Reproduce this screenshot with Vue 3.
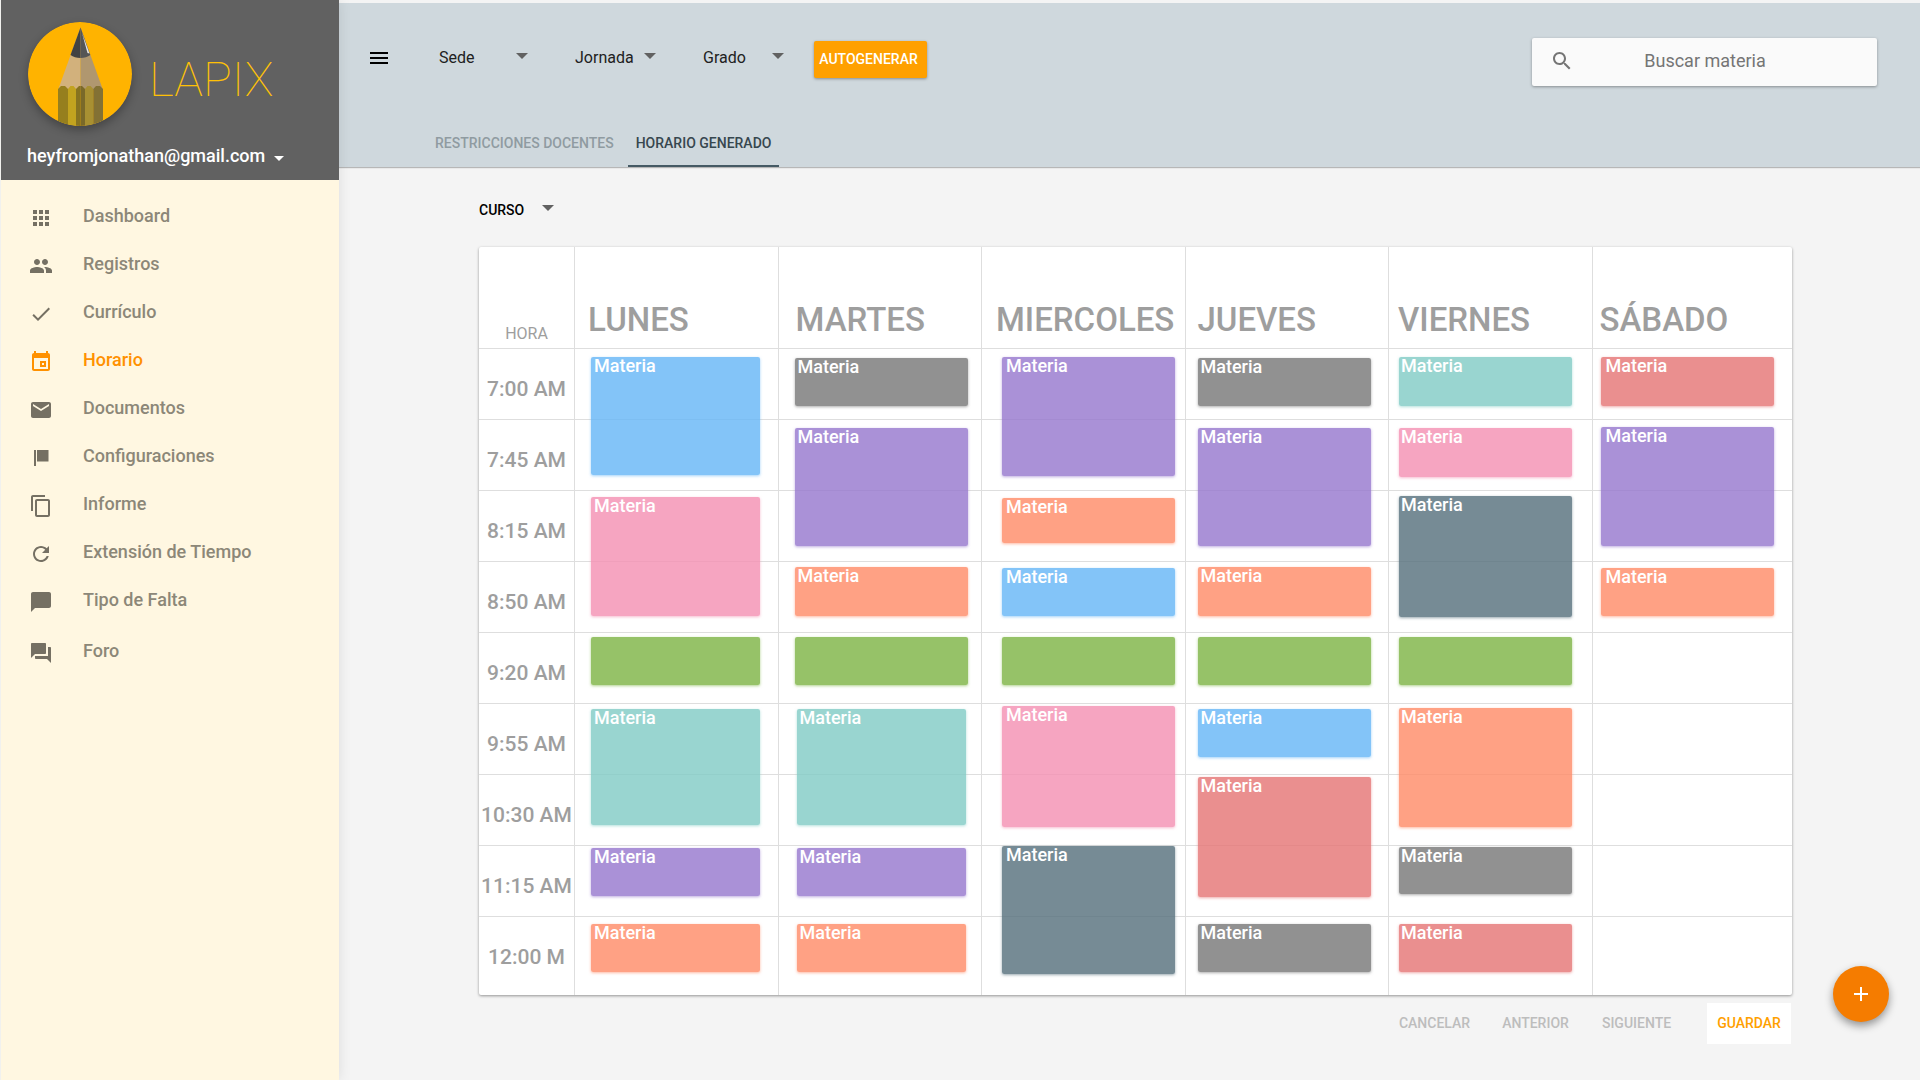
<script setup>
const navGroups = [
  [
    { label: 'Dashboard', icon: 'M4 8h4V4H4v4zm6 12h4v-4h-4v4zm-6 0h4v-4H4v4zm0-6h4v-4H4v4zm6 0h4v-4h-4v4zm6-10v4h4V4h-4zm-6 4h4V4h-4v4zm6 6h4v-4h-4v4zm0 6h4v-4h-4v4z' },
    { label: 'Registros', icon: 'M16 11c1.66 0 2.99-1.34 2.99-3S17.66 5 16 5c-1.66 0-3 1.34-3 3s1.34 3 3 3zm-8 0c1.66 0 2.99-1.34 2.99-3S9.66 5 8 5C6.34 5 5 6.34 5 8s1.34 3 3 3zm0 2c-2.33 0-7 1.17-7 3.5V19h14v-2.5c0-2.33-4.67-3.5-7-3.5zm8 0c-.29 0-.62.02-.97.05 1.16.84 1.97 1.97 1.97 3.45V19h6v-2.5c0-2.33-4.67-3.5-7-3.5z' },
    { label: 'Currículo', icon: 'M9 16.17L4.83 12l-1.42 1.41L9 19 21 7l-1.41-1.41z' },
    { label: 'Horario', active: true, icon: 'M5 1h2v2h10V1h2v2c1.1 0 2 .9 2 2v14c0 1.100-.9 2-2 2H5c-1.100 0-2-.9-2-2V5c0-1.100.9-2 2-2V1zm0 7v11h14V8H5zm6 3h6v6h-6v-6zm2 2v2h2v-2h-2z' },
    { label: 'Documentos', icon: 'M20 4H4c-1.100 0-1.990.9-1.990 2L2 18c0 1.100.9 2 2 2h16c1.100 0 2-.9 2-2V6c0-1.100-.9-2-2-2zm0 4l-8 5-8-5V6l8 5 8-5v2z' },
    { label: 'Configuraciones', icon: 'M5 4h2v16H5zM8 4h11.500v11.500H8z' },
    { label: 'Informe', icon: 'M16 1H4c-1.100 0-2 .9-2 2v14h2V3h12V1zm3 4H8c-1.100 0-2 .9-2 2v14c0 1.100.9 2 2 2h11c1.100 0 2-.9 2-2V7c0-1.100-.9-2-2-2zm0 16H8V7h11v14z' },
    { label: 'Extensión de Tiempo', icon: 'M17.650 6.350C16.200 4.900 14.210 4 12 4c-4.420 0-7.990 3.580-7.990 8s3.570 8 7.990 8c3.730 0 6.840-2.550 7.730-6h-2.080c-.82 2.330-3.040 4-5.650 4-3.310 0-6-2.690-6-6s2.690-6 6-6c1.660 0 3.140.69 4.220 1.780L13 11h7V4l-2.350 2.350z' },
    { label: 'Tipo de Falta', icon: 'M20 2H4c-1.100 0-2 .9-2 2v18l4-4h14c1.100 0 2-.9 2-2V4c0-1.100-.9-2-2-2z' },
  ],
  [
    { label: 'Foro', icon: 'M21 6h-2v9H6v2c0 .55.45 1 1 1h11l4 4V7c0-.55-.45-1-1-1zm-4 6V3c0-.55-.45-1-1-1H3c-.55 0-1 .45-1 1v14l4-4h10c.55 0 1-.45 1-1z' },
  ],
]

const filters = ['Sede', 'Jornada', 'Grado']

const hours = ['7:00 AM', '7:45 AM', '8:15 AM', '8:50 AM', '9:20 AM', '9:55 AM', '10:30 AM', '11:15 AM', '12:00 M']

/* Block: [row, offset inside the row, height, colour, free period] */
const days = [
  {
    name: 'LUNES', title: 13, left: 16, right: 18, pad: 3,
    blocks: [[0, 8, 118, 'blue'], [2, 6, 119, 'pink'], [4, 4, 48, 'green', true], [5, 5, 116, 'teal'], [7, 2, 48, 'purple'], [8, 7, 48, 'orange']],
  },
  {
    name: 'MARTES', title: 17, left: 16, right: 13, pad: 3,
    blocks: [[0, 9, 48, 'gray'], [1, 8, 118, 'purple'], [3, 5, 49, 'orange'], [4, 4, 48, 'green', true], [5, 5, 116, 'teal'], [7, 2, 48, 'purple'], [8, 7, 48, 'orange']],
    narrowFrom: 5,
  },
  {
    name: 'MIERCOLES', title: 14, left: 20, right: 10, pad: 4,
    blocks: [[0, 8, 119, 'purple'], [2, 7, 45, 'orange'], [3, 6, 48, 'blue'], [4, 4, 48, 'green', true], [5, 2, 121, 'pink'], [7, 0, 128, 'slate']],
  },
  {
    name: 'JUEVES', title: 12, left: 12, right: 17, pad: 3,
    blocks: [[0, 9, 48, 'gray'], [1, 8, 118, 'purple'], [3, 5, 49, 'orange'], [4, 4, 48, 'green', true], [5, 5, 48, 'blue'], [6, 2, 120, 'red'], [8, 7, 48, 'gray']],
  },
  {
    name: 'VIERNES', title: 9, left: 10, right: 20, pad: 2,
    blocks: [[0, 8, 49, 'teal'], [1, 8, 49, 'pink'], [2, 5, 121, 'slate'], [4, 4, 48, 'green', true], [5, 4, 119, 'orange'], [7, 1, 47, 'gray'], [8, 7, 48, 'red']],
  },
  {
    name: 'SÁBADO', title: 7, left: 8, right: 18, pad: 5,
    blocks: [[0, 8, 49, 'red'], [1, 7, 119, 'purple'], [3, 6, 48, 'orange']],
  },
]

const blocksAt = (day, row) => day.blocks.filter((b) => b[0] === row)

function blockStyle(day, block) {
  const narrow = day.narrowFrom !== undefined && block[0] >= day.narrowFrom ? 2 : 0
  return {
    top: block[1] + 'px',
    height: block[2] + 'px',
    left: day.left + narrow + 'px',
    right: day.right + narrow + 'px',
    paddingLeft: day.pad + 'px',
  }
}
</script>

<template>
  <div class="layout">
    <aside class="sidebar">
      <div class="profile">
        <div class="brand">
          <svg class="logo" viewBox="0 0 104 104" aria-hidden="true">
            <defs>
              <clipPath id="disc"><circle cx="52" cy="52" r="52" /></clipPath>
            </defs>
            <g clip-path="url(#disc)">
              <rect width="104" height="104" fill="#ffb300" />
              <path d="M52.500 5.500L30 68h22.500z" fill="#d2b17c" />
              <path d="M52.500 5.500L75 68H52.500z" fill="#b0976f" />
              <path d="M52.500 5.500L42.500 33q4 3 10 3z" fill="#424242" />
              <path d="M52.500 5.500L62.300 33q-4 3-9.800 3z" fill="#555" />
              <path d="M54 11L61.500 31.500L59.500 31z" fill="#e8e8e8" />
              <path d="M30 67L33 64h4l3 3v37H30z" fill="#967f1e" />
              <path d="M40 67L42.500 64h3l2.500 3v37h-8z" fill="#c2a31f" />
              <path d="M48 67L51 64h1.500v40H48z" fill="#87731f" />
              <path d="M52.500 64H54l3 3v37h-4.500z" fill="#7a6929" />
              <path d="M57 67L59.500 64h3l2.800 3v37H57z" fill="#a89032" />
              <path d="M65.300 67L68 64h4l3 3v37h-9.700z" fill="#837134" />
            </g>
          </svg>
          <span class="brand-name">LAPIX</span>
        </div>
        <button type="button" class="account">
          heyfromjonathan@gmail.com
          <svg class="account-arrow" viewBox="0 0 10 5" aria-hidden="true"><path d="M0 0h10L5 5z" /></svg>
        </button>
      </div>
      <nav class="nav">
        <ul v-for="(group, g) in navGroups" :key="g">
          <li v-for="item in group" :key="item.label">
            <a href="#" :class="{ active: item.active }">
              <svg viewBox="0 0 24 24" aria-hidden="true"><path :d="item.icon" /></svg>
              <span>{{ item.label }}</span>
            </a>
          </li>
        </ul>
      </nav>
    </aside>

    <div class="page">
      <header class="topbar">
        <div class="toolbar">
          <div class="filters">
            <button type="button" class="menu" aria-label="Menú">
              <svg viewBox="0 0 24 24" aria-hidden="true"><path d="M3 18h18v-2H3v2zm0-5h18v-2H3v2zm0-7v2h18V6H3z" /></svg>
            </button>
            <label v-for="name in filters" :key="name" class="picker" :class="{ wide: name === 'Sede' }">
              <select :aria-label="name"><option>{{ name }}</option></select>
              <svg viewBox="0 0 10 5" aria-hidden="true"><path d="M0 0h10L5 5z" /></svg>
            </label>
            <button type="button" class="generate">AUTOGENERAR</button>
          </div>
          <label class="search">
            <svg viewBox="0 0 24 24" aria-hidden="true"><path d="M15.500 14h-.79l-.28-.27C15.410 12.590 16 11.110 16 9.500 16 5.910 13.090 3 9.500 3S3 5.910 3 9.500 5.910 16 9.500 16c1.610 0 3.090-.59 4.230-1.570l.27.28v.79l5 4.990L20.490 19l-4.990-5zm-6 0C7.010 14 5 11.990 5 9.500S7.010 5 9.500 5 14 7.010 14 9.500 11.990 14 9.500 14z" /></svg>
            <input type="text" placeholder="Buscar materia" aria-label="Buscar materia" />
          </label>
        </div>
        <nav class="tabs">
          <a href="#">RESTRICCIONES DOCENTES</a>
          <a href="#" class="current">HORARIO GENERADO</a>
        </nav>
      </header>

      <main class="content">
        <label class="picker course">
          <select aria-label="Curso"><option>CURSO</option></select>
          <svg viewBox="0 0 10 5" aria-hidden="true"><path d="M0 0h10L5 5z" /></svg>
        </label>

        <table class="timetable">
          <colgroup>
            <col class="col-hour" />
            <col v-for="day in days" :key="day.name" :class="{ 'col-day': day.name !== 'SÁBADO' }" />
          </colgroup>
          <thead>
            <tr>
              <th scope="col" class="hour-title">HORA</th>
              <th v-for="day in days" :key="day.name" scope="col" class="day-title" :style="{ paddingLeft: day.title + 'px' }">{{ day.name }}</th>
            </tr>
          </thead>
          <tbody>
            <tr v-for="(hour, row) in hours" :key="hour">
              <th scope="row" class="hour">{{ hour }}</th>
              <td v-for="day in days" :key="day.name">
                <button
                  v-for="block in blocksAt(day, row)"
                  :key="block[1]"
                  type="button"
                  class="block"
                  :class="block[3]"
                  :style="blockStyle(day, block)"
                  :aria-label="block[4] ? 'Descanso' : undefined"
                >{{ block[4] ? '' : 'Materia' }}</button>
              </td>
            </tr>
          </tbody>
        </table>

        <div class="actions">
          <button type="button">CANCELAR</button>
          <button type="button">ANTERIOR</button>
          <button type="button">SIGUIENTE</button>
          <button type="button" class="save">GUARDAR</button>
        </div>
      </main>
    </div>

    <button type="button" class="fab" aria-label="Agregar">
      <svg viewBox="0 0 24 24" aria-hidden="true"><path d="M19 13h-6v6h-2v-6H5v-2h6V5h2v6h6v2z" /></svg>
    </button>
  </div>
</template>

<style>
body {
  background: #f4f4f4;
}
</style>

<style scoped>
* {
  box-sizing: border-box;
}
button,
input,
select {
  font: inherit;
  color: inherit;
  border: 0;
  padding: 0;
  margin: 0;
  background: none;
  outline: none;
}
button {
  cursor: pointer;
}
svg {
  display: block;
  fill: currentColor;
  flex: none;
}
a {
  color: inherit;
  text-decoration: none;
}
.layout {
  position: relative;
  display: flex;
  min-height: 100vh;
  font-family: Roboto, "Liberation Sans", sans-serif;
  background: #f4f4f4;
}

/* Sidebar */
.sidebar {
  position: relative;
  z-index: 2;
  flex: 0 0 339px;
  background: #fff7e1;
  border-left: 1px solid #f1f1ee;
  box-shadow: 0 0 12px rgba(0, 0, 0, 0.1);
}
.profile {
  height: 180px;
  padding: 22px 26px 0;
  background: #616161;
}
.brand {
  display: flex;
  align-items: center;
  gap: 17px;
  padding-left: 1px;
}
.logo {
  width: 104px;
  height: 104px;
  border-radius: 50%;
  box-shadow: 0 4px 10px rgba(0, 0, 0, 0.3);
}
.brand-name {
  padding-top: 12px;
  font-size: 48px;
  line-height: 56px;
  font-weight: 100;
  color: #ffc107;
}
.account {
  display: flex;
  align-items: center;
  gap: 9px;
  height: 24px;
  margin-top: 18px;
  font-size: 18px;
  line-height: 24px;
  font-weight: 500;
  color: #fff;
}
.account-arrow {
  width: 10px;
  height: 5px;
  margin-top: 4px;
}
.nav {
  display: flex;
  flex-direction: column;
  gap: 3px;
  padding-top: 12px;
}
.nav ul {
  list-style: none;
  margin: 0;
  padding: 0;
}
.nav a {
  display: flex;
  align-items: center;
  gap: 30px;
  height: 48px;
  padding-left: 28px;
  font-size: 18px;
  line-height: 24px;
  font-weight: 500;
  color: #8c8778;
}
.nav svg {
  width: 24px;
  height: 24px;
  margin-top: 4px;
  color: #757063;
}
.nav a.active,
.nav a.active svg {
  color: #ff9100;
}

/* Top bar */
.page {
  flex: 1;
  min-width: 0;
}
.topbar {
  display: flex;
  flex-direction: column;
  justify-content: space-between;
  height: 167px;
  padding: 35px 43px 0 28px;
  border-top: 3px solid #f4f4f4;
  background: #cfd8dd;
  box-shadow: 0 1px 1px rgba(0, 0, 0, 0.25);
}
.toolbar {
  display: flex;
  justify-content: space-between;
  align-items: flex-start;
}
.filters {
  display: flex;
  align-items: center;
  height: 42px;
}
.menu {
  margin: 0 48px 2px 0;
  color: #000;
}
.menu svg {
  width: 24px;
  height: 24px;
}
.picker {
  position: relative;
  display: flex;
  align-items: center;
  width: 81px;
  height: 24px;
  font-size: 16px;
  line-height: 24px;
  color: #212121;
}
.filters .picker {
  margin: 0 47px 2px 0;
}
.picker.wide {
  width: 89px;
}
.picker select {
  appearance: none;
  width: 100%;
  height: 24px;
}
.picker svg {
  position: absolute;
  top: 7px;
  right: 0;
  width: 12px;
  height: 6px;
  color: #616161;
  pointer-events: none;
}
.generate {
  width: 113px;
  height: 37px;
  margin-left: -17px;
  padding-right: 4px;
  border-radius: 2px;
  background: #ffa000;
  color: #fff;
  font-size: 14px;
  font-weight: 500;
  box-shadow: 0 1px 3px rgba(0, 0, 0, 0.35);
}
.search {
  display: flex;
  align-items: center;
  width: 345px;
  height: 48px;
  padding: 0 17px 2px 18px;
  border-radius: 2px;
  background: #fafafa;
  color: #757575;
  box-shadow: 0 1px 3px rgba(0, 0, 0, 0.35);
}
.search svg {
  width: 24px;
  height: 24px;
}
.search input {
  flex: 1;
  min-width: 0;
  padding: 0 40px 2px 16px;
  font-size: 18px;
  text-align: center;
}
.search input::placeholder {
  color: #757575;
  opacity: 1;
}
.tabs {
  display: flex;
  gap: 14px;
  padding-left: 68px;
  font-size: 14px;
  line-height: 20px;
  font-weight: 500;
  color: #8f9ba1;
}
.tabs a {
  padding-bottom: 12px;
  border-bottom: 2px solid transparent;
}
.tabs .current {
  padding: 0 8px 12px;
  color: #37474f;
  border-bottom-color: #455a64;
}

/* Timetable */
.content {
  padding: 31px 128px 0 140px;
}
.course {
  width: 75px;
  margin-bottom: 25px;
  font-size: 14px;
  font-weight: 500;
  color: #000;
}
.timetable {
  width: 100%;
  table-layout: fixed;
  border-collapse: separate;
  border-spacing: 0;
  background: #fff;
  border-radius: 2px;
  box-shadow: 0 1px 3px rgba(0, 0, 0, 0.4);
}
.col-hour {
  width: 95px;
}
.col-day {
  width: 15.5%;
}
.timetable th {
  padding: 0;
  font-weight: 500;
  color: #9e9e9e;
}
.timetable td {
  position: relative;
  padding: 0;
  border-left: 1px solid #dedede;
  border-top: 1px solid #dedede;
}
.timetable thead th {
  height: 101px;
  vertical-align: bottom;
}
.timetable .hour-title {
  padding-bottom: 4px;
  font-size: 16px;
  line-height: 20px;
  font-weight: 400;
}
.timetable .day-title {
  padding-bottom: 8px;
  border-left: 1px solid #dedede;
  font-size: 33px;
  line-height: 40px;
  text-align: left;
  white-space: nowrap;
}
.timetable .hour {
  height: 71px;
  padding-top: 10px;
  border-top: 1px solid #dedede;
  font-size: 21px;
  line-height: 24px;
  white-space: nowrap;
}
.timetable tr:last-child .hour {
  height: 79px;
  padding-bottom: 8px;
}
.block {
  position: absolute;
  z-index: 1;
  display: flex;
  align-items: flex-start;
  border-radius: 2px;
  font-size: 18px;
  line-height: 18px;
  font-weight: 500;
  color: #fff;
}
.block.blue { background: #64b5f6cc; box-shadow: 0 1px 3px #64b5f699; }
.block.pink { background: #f48fb1cc; box-shadow: 0 1px 3px #f48fb199; }
.block.green { background: #7cb342cc; box-shadow: 0 1px 3px #7cb34299; }
.block.teal { background: #80cbc4cc; box-shadow: 0 1px 3px #80cbc499; }
.block.purple { background: #9575cdcc; box-shadow: 0 1px 3px #9575cd99; }
.block.orange { background: #ff8a65cc; box-shadow: 0 1px 3px #ff8a6599; }
.block.gray { background: #757575cc; box-shadow: 0 1px 3px #75757599; }
.block.red { background: #e57373cc; box-shadow: 0 1px 3px #e5737399; }
.block.slate { background: #546e7acc; box-shadow: 0 1px 3px #546e7a99; }

.actions {
  display: flex;
  justify-content: flex-end;
  padding: 8px 1px 0 0;
  font-size: 14px;
  font-weight: 500;
  color: #bdbdbd;
}
.actions button {
  width: 101px;
  height: 41px;
  padding-bottom: 2px;
}
.actions .save {
  width: 84px;
  margin-left: 20px;
  background: #fff;
  color: #ffa000;
}
.fab {
  position: absolute;
  right: 31px;
  bottom: 58px;
  display: flex;
  align-items: center;
  justify-content: center;
  width: 56px;
  height: 56px;
  border-radius: 50%;
  background: #f57c00;
  color: #fff;
  box-shadow: 0 4px 8px rgba(0, 0, 0, 0.4);
}
.fab svg {
  width: 24px;
  height: 24px;
}
</style>
